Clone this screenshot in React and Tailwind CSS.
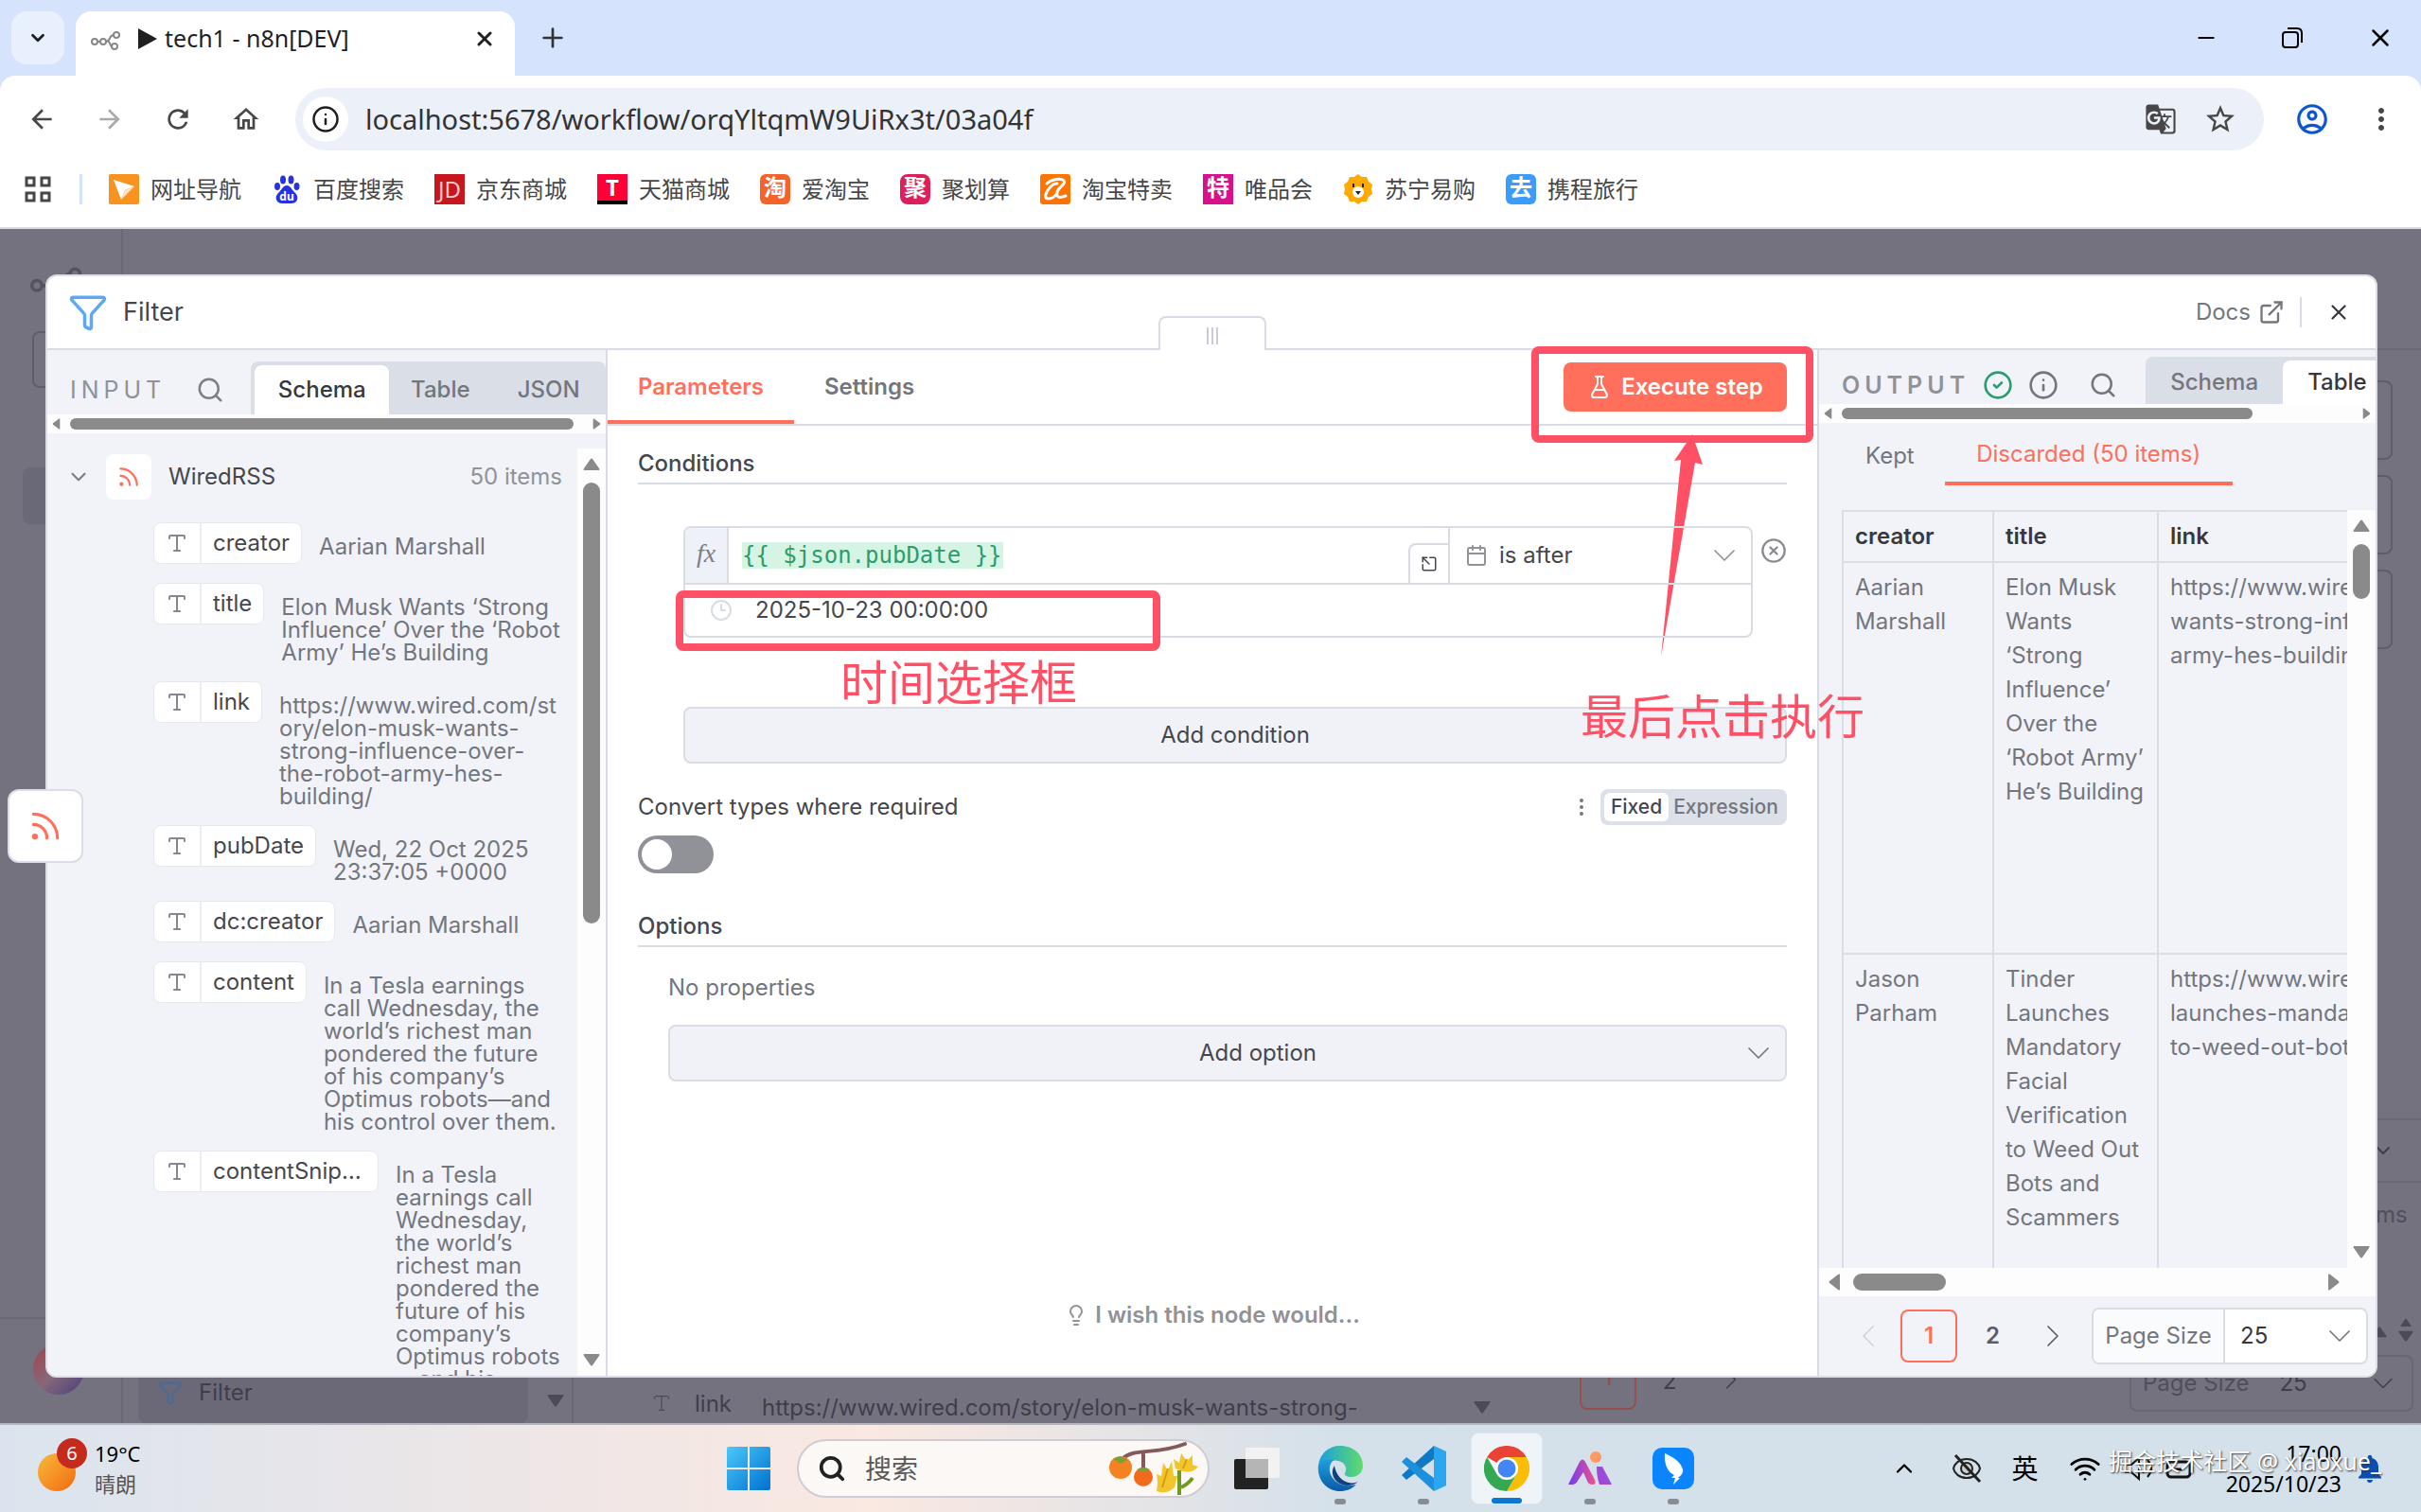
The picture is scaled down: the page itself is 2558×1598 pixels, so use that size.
import {
  Calendar, ChevronDown, ChevronLeft, ChevronRight, ChevronUp, CircleCheck, CircleX, Clock3, EllipsisVertical,
  ExternalLink, Funnel, Info, Lightbulb, Minus, Plus, Rss, Search, SquareArrowOutUpLeft, Type, Wifi, X,
} from 'lucide-react';
import { MdArrowBack, MdArrowForward, MdGTranslate, MdMoreVert, MdNotifications, MdOutlineAccountCircle, MdOutlineHome, MdRefresh, MdStarBorder } from 'react-icons/md';

const bookmarks = [
  { label: '网址导航', icon: <CompassIcon /> },
  { label: '百度搜索', icon: <PawIcon /> },
  { label: '京东商城', icon: <span className="w-8 h-8 bg-[#c8161d] text-[#f3c9c9] text-2xl leading-8 text-center">JD</span> },
  { label: '天猫商城', icon: <span className="w-8 h-8 bg-[#ff0036] border-b-4 border-black text-white text-2xl leading-7 font-bold text-center">T</span> },
  { label: '爱淘宝', icon: <span className="w-8 h-8 rounded-md bg-[#f4642a] text-white text-2xl leading-7 font-bold text-center">淘</span> },
  { label: '聚划算', icon: <span className="w-8 h-8 rounded-lg bg-[#dd1f5c] text-white text-2xl leading-7 font-bold text-center">聚</span> },
  { label: '淘宝特卖', icon: <AliIcon /> },
  { label: '唯品会', icon: <span className="w-8 h-8 bg-[#d8108c] text-white text-2xl leading-7 font-bold text-center">特</span> },
  { label: '苏宁易购', icon: <LionIcon /> },
  { label: '携程旅行', icon: <span className="w-8 h-8 rounded-md bg-[#3b9dfb] text-white text-2xl leading-7 font-bold text-center">去</span> },
];

const fields = [
  { name: 'creator', value: ['Aarian Marshall'] },
  { name: 'title', value: ['Elon Musk Wants ‘Strong', 'Influence’ Over the ‘Robot', 'Army’ He’s Building'] },
  { name: 'link', value: ['https://www.wired.com/st', 'ory/elon-musk-wants-', 'strong-influence-over-', 'the-robot-army-hes-', 'building/'] },
  { name: 'pubDate', value: ['Wed, 22 Oct 2025', '23:37:05 +0000'] },
  { name: 'dc:creator', value: ['Aarian Marshall'] },
  {
    name: 'content',
    value: ['In a Tesla earnings', 'call Wednesday, the', 'world’s richest man', 'pondered the future', 'of his company’s', 'Optimus robots—and', 'his control over them.'],
  },
  {
    name: 'contentSnippet',
    value: ['In a Tesla', 'earnings call', 'Wednesday,', 'the world’s', 'richest man', 'pondered the', 'future of his', 'company’s', 'Optimus robots', '—and his'],
  },
];

const rows = [
  {
    creator: 'Aarian Marshall',
    title: 'Elon Musk Wants ‘Strong Influence’ Over the ‘Robot Army’ He’s Building',
    link: ['https://www.wired.com/story/elon-musk-', 'wants-strong-influence-over-the-robot-', 'army-hes-building/'],
  },
  {
    creator: 'Jason Parham',
    title: 'Tinder Launches Mandatory Facial Verification to Weed Out Bots and Scammers',
    link: ['https://www.wired.com/story/tinder-', 'launches-mandatory-facial-verification-', 'to-weed-out-bots-and-scammers/'],
  },
];

function CompassIcon() {
  return (
    <svg viewBox="0 0 32 32" className="w-8 h-8">
      <rect width="32" height="32" rx="2" fill="#f7931e" />
      <path d="M5 6 27 13 17 17 13 27z" fill="#fff" />
      <path d="M17 17 27 13 13 27z" fill="#fde3c3" />
    </svg>
  );
}

function PawIcon() {
  return (
    <svg viewBox="0 0 32 32" className="w-8 h-8" fill="#2932e1">
      <ellipse cx="12" cy="6" rx="3" ry="4.5" />
      <ellipse cx="20.5" cy="6" rx="3" ry="4.5" />
      <ellipse cx="6" cy="13" rx="3" ry="4" />
      <ellipse cx="26.5" cy="13" rx="3" ry="4" />
      <path d="M16 12c4 0 5 4 8 7s4 5 3 8-4 4-6 4h-10c-2 0-5-1-6-4s0-5 3-8 4-7 8-7z" />
      <text x="16" y="28" fontSize="12" fontWeight="700" textAnchor="middle" fill="#fff">du</text>
    </svg>
  );
}

function AliIcon() {
  return (
    <svg viewBox="0 0 32 32" className="w-8 h-8">
      <rect width="32" height="32" rx="3" fill="#ff7300" />
      <path d="M7 10c5-5 15-6 18-3s-6 7-7 12 1 7 9 4M18 10c-4-1-9 5-11 9s-2 7 2 7 7-3 9-6" fill="none" stroke="#fff" strokeWidth="3" strokeLinecap="round" />
    </svg>
  );
}

function LionIcon() {
  return (
    <svg viewBox="0 0 32 32" className="w-8 h-8">
      <path d="M16 0l4 3 5 0 2 5 4 3-1 5 1 5-4 3-2 5-5 0-4 3-4-3-5 0-2-5-4-3 1-5-1-5 4-3 2-5 5 0z" fill="#ffaa01" />
      <circle cx="16" cy="19" r="6" fill="#fff" />
      <path d="M11 10v4M21 10v4" stroke="#222" strokeWidth="2" />
      <path d="M13 18h6l-3 4z" fill="#222" />
    </svg>
  );
}

function NodesIcon({ className }) {
  return (
    <svg viewBox="0 0 32 20" className={className} fill="none" stroke="currentColor" strokeWidth="2">
      <circle cx="4" cy="11" r="3" />
      <circle cx="13" cy="11" r="3" />
      <circle cx="27" cy="4" r="3" />
      <circle cx="25" cy="16" r="3" />
      <path d="M7 11h3M16 11c5 0 3-7 8-7M18 11c3 0 2 5 4 5" />
    </svg>
  );
}

function FlaskIcon() {
  return (
    <svg viewBox="0 0 18 24" className="w-[18px] h-6" fill="none" stroke="currentColor" strokeWidth="2" strokeLinecap="round" strokeLinejoin="round">
      <path d="M5 1h8M7 1v8L1 20q0 3 2 3h12q2 0 2-3L11 9V1M4 15h10" />
    </svg>
  );
}

function Arrow({ dir, fill = '#8a8a8a', className = '' }) {
  const paths = {
    left: 'M14 1v16q0 1-2 0L3 10q-1-1 0-2L12 1q2-1 2 0z',
    right: 'M4 1v16q0 1 2 0L15 10q1-1 0-2L6 1Q4 0 4 1z',
    up: 'M1 15h16q1-1 0-2L10 3q-1-1-2 0L1 13q-1 1 0 2z',
    down: 'M1 3h16q1 1 0 2L10 15q-1 1-2 0L1 5q-1-1 0-2z',
  };
  return (
    <svg viewBox="0 0 18 18" fill={fill} className={`shrink-0 ${className}`}>
      <path d={paths[dir]} />
    </svg>
  );
}

function HeaderScrollbar({ thumb }) {
  return (
    <div className="h-5 shrink-0 bg-[#fdfdfe] flex items-center gap-2 px-1">
      <Arrow dir="left" className="w-3 h-3" />
      <div className="flex-1 flex">
        <div className={`h-3 rounded-full bg-[#8a8a8a] ${thumb}`} />
      </div>
      <Arrow dir="right" className="w-3 h-3" />
    </div>
  );
}

function VerticalScrollbar({ thumb }) {
  return (
    <div className="w-[30px] shrink-0 bg-[#fdfdfe] flex flex-col items-center gap-[10px] py-2">
      <Arrow dir="up" className="w-[18px] h-[18px]" />
      <div className={`w-[18px] rounded-full bg-[#8a8a8a] ${thumb}`} />
      <Arrow dir="down" className="w-[18px] h-[18px] mt-auto" />
    </div>
  );
}

function BrowserChrome() {
  return (
    <header className="shrink-0 bg-[#d5e3fd] font-['Noto_Sans','Noto_Sans_CJK_SC',sans-serif]">
      <div className="h-20 flex items-end">
        <button aria-label="Search tabs" className="self-center ml-3 w-14 h-14 rounded-2xl bg-[#e8effd] flex items-center justify-center text-[#1f1f1f]">
          <ChevronDown size={22} strokeWidth={3} />
        </button>
        <div className="ml-3 w-[464px] h-[68px] rounded-t-2xl bg-white flex items-center pl-4 pr-5 pb-[10px] text-[#1f1f1f]">
          <NodesIcon className="w-8 h-5 mt-1 text-[#888] shrink-0" />
          <svg viewBox="0 0 20 22" className="w-5 h-[22px] ml-[18px] shrink-0"><path d="M0 0 20 11 0 22z" fill="#1f1f1f" /></svg>
          <span className="ml-2 flex-1 text-[25px] whitespace-nowrap">tech1 - n8n[DEV]</span>
          <button aria-label="Close tab"><X size={24} strokeWidth={3} /></button>
        </div>
        <button aria-label="New tab" className="ml-6 self-center text-[#333]"><Plus size={32} strokeWidth={2} /></button>
        <div className="ml-auto self-center flex gap-[66px] pr-7 text-black">
          <button aria-label="Minimize"><Minus size={26} strokeWidth={2} /></button>
          <button aria-label="Restore">
            <svg viewBox="0 0 24 24" className="w-6 h-6" fill="none" stroke="currentColor" strokeWidth="2">
              <rect x="2" y="6" width="16" height="16" rx="3" />
              <path d="M7 2h10q5 0 5 5v10" />
            </svg>
          </button>
          <button aria-label="Close window"><X size={30} strokeWidth={2} /></button>
        </div>
      </div>

      <div className="h-[92px] bg-white rounded-t-2xl flex items-center pl-7 pr-6 text-[#474747]">
        <div className="flex items-center gap-10 text-[32px]">
          <button aria-label="Back"><MdArrowBack /></button>
          <button aria-label="Forward" className="text-[#aaa]"><MdArrowForward /></button>
          <button aria-label="Reload"><MdRefresh /></button>
          <button aria-label="Home"><MdOutlineHome /></button>
        </div>
        <div className="ml-9 flex-1 h-[66px] rounded-full bg-[#ebf0f9] flex items-center pl-2 pr-7">
          <span className="w-12 h-12 rounded-full bg-white flex items-center justify-center text-[#1f1f1f]">
            <Info size={30} strokeWidth={2} />
          </span>
          <input aria-label="Address" className="ml-[18px] flex-1 bg-transparent text-[29px] text-[#333] outline-none" defaultValue="localhost:5678/workflow/orqYltqmW9UiRx3t/03a04f" />
          <button aria-label="Translate" className="text-[34px]"><MdGTranslate /></button>
          <button aria-label="Bookmark" className="text-[36px] ml-7"><MdStarBorder /></button>
        </div>
        <button aria-label="Profile" className="ml-8 text-[38px] text-[#0b57d0]"><MdOutlineAccountCircle /></button>
        <button aria-label="Menu" className="ml-9 text-[36px]"><MdMoreVert /></button>
      </div>

      <nav className="h-[70px] bg-white border-b-2 border-[#dcdcde] flex items-start pt-3 pl-[26px]">
        <svg viewBox="0 0 28 28" className="w-7 h-7 mt-[2px]" fill="none" stroke="#474747" strokeWidth="3">
          <rect x="2" y="2" width="8" height="8" /><rect x="18" y="2" width="8" height="8" />
          <rect x="2" y="18" width="8" height="8" /><rect x="18" y="18" width="8" height="8" />
        </svg>
        <span className="w-[3px] h-8 ml-[30px] mr-7 bg-[#d5e3fd]" />
        <div className="flex gap-8">
          {bookmarks.map(b => (
            <a key={b.label} href="#" className="flex items-center gap-3 h-8 text-2xl leading-8 text-[#474747] whitespace-nowrap">
              {b.icon}
              {b.label}
            </a>
          ))}
        </div>
      </nav>
    </header>
  );
}

// Dimmed workflow editor that shows around the open node window
function Backdrop() {
  return (
    <div aria-hidden="true" className="absolute inset-0 flex overflow-hidden text-2xl text-[#3f3e49]">
      <div className="w-[130px] shrink-0 border-r-2 border-[#6a6875] flex flex-col">
        <NodesIcon className="w-14 h-9 mt-10 ml-8 text-[#55535f]" />
        <div className="mt-8 ml-[34px] h-[60px] rounded-lg border-2 border-[#5f5d6a]" />
        <div className="mt-[84px] ml-6 h-[60px] rounded-lg bg-[#6a6978]" />
        <div className="mt-auto h-[112px] border-t-2 border-[#6a6875] pl-[35px] pt-[26px]">
          <div className="w-[54px] h-[54px] rounded-full bg-linear-to-br from-[#a03f4c] via-[#87667a] to-[#4a3f78]" />
        </div>
      </div>
      <div className="flex-1 flex items-end">
        <div className="ml-4 w-[412px] h-14 bg-[#6b6977] rounded-b-lg flex items-center pl-5 pb-2 gap-4">
          <Funnel size={28} className="text-[#4d6a92]" /> Filter
        </div>
        <div className="w-12 h-14 border-r-2 border-[#6a6875] flex items-center justify-center pl-3 pt-2"><Arrow dir="down" fill="#4c4a56" className="w-[18px] h-[18px]" /></div>
        <div className="ml-[82px] h-9 flex gap-6 whitespace-nowrap">
          <Type size={22} strokeWidth={1} className="mt-1" />
          <span>link</span>
          <span className="ml-2 pt-1">https://www.wired.com/story/elon-musk-wants-strong-</span>
        </div>
        <Arrow dir="down" fill="#4c4a56" className="w-[18px] h-[18px] mb-2 ml-[122px]" />
        <div className="ml-[94px] mb-[14px] w-[60px] h-14 rounded-lg border-2 border-[#94504f] text-[#94504f] text-center leading-10">1</div>
        <span className="ml-7 mb-7">2</span>
        <ChevronRight size={36} strokeWidth={1} className="ml-10 mb-7" />
        <div className="ml-auto mr-2 mb-3 w-[300px] h-[60px] shrink-0 rounded-lg border-2 border-[#686673] flex items-center pl-3">
          <span className="text-[#504e5a]">Page Size</span>
          <span className="ml-8 flex-1">25</span>
          <ChevronDown size={36} strokeWidth={1} className="mr-3" />
        </div>
      </div>
      <div className="absolute right-0 top-0 w-[60px] h-full flex flex-col">
        <div className="h-[128px] border-b-2 border-[#6a6875]" />
        <div className="mt-8 mr-[30px] h-[84px] rounded-lg border-2 border-[#605e6b]" />
        <div className="mt-4 mr-[30px] h-[84px] rounded-lg border-2 border-[#605e6b]" />
        <div className="mt-4 mr-[30px] h-[84px] rounded-lg border-2 border-[#605e6b]" />
        <div className="mt-auto h-[68px] border-y-2 border-[#6a6875] flex items-center pl-2"><ChevronDown size={24} /></div>
        <div className="h-[68px] leading-[68px] pl-3 text-[#504e5a]">ms</div>
        <div className="h-[74px]" />
        <div className="h-28 flex gap-3 pl-2">
          <Arrow dir="up" fill="#4c4a56" className="w-4 h-4 mt-2" />
          <div className="flex flex-col">
            <Arrow dir="up" fill="#4c4a56" className="w-4 h-3" />
            <Arrow dir="down" fill="#4c4a56" className="w-4 h-4" />
          </div>
        </div>
      </div>
    </div>
  );
}

function InputPanel() {
  return (
    <section aria-label="Input" className="w-[592px] shrink-0 border-r-2 border-[#d9dbe6] bg-[#f1f3f9] rounded-bl-xl flex flex-col min-h-0 overflow-hidden">
      <div className="h-[68px] shrink-0 flex items-end pl-6">
        <h2 className="h-[52px] leading-[52px] text-[25px] tracking-[5px] text-[#909298]">INPUT</h2>
        <button aria-label="Search input" className="ml-8 h-[52px] text-[#7d7f86]"><Search size={30} strokeWidth={2} /></button>
        <div className="ml-7 flex-1 h-14 rounded-t-lg bg-[#d9dee7] pt-1 pl-1 flex text-2xl font-medium text-[#74767d]">
          <button className="w-[142px] rounded-t-lg bg-white text-[#37383d]">Schema</button>
          <button className="w-[108px]">Table</button>
          <button className="flex-1">JSON</button>
        </div>
      </div>
      <HeaderScrollbar thumb="w-[532px]" />
      <div className="flex-1 min-h-0 flex">
        <div className="flex-1 min-w-0 overflow-hidden pt-[22px] pl-6 pr-4">
          <div className="flex items-center h-12 text-2xl">
            <ChevronDown size={26} className="-ml-1 text-[#7d7f86]" />
            <span className="ml-4 w-12 h-12 rounded-lg bg-white flex items-center justify-center text-[#ff6f5c]"><Rss size={26} strokeWidth={2} /></span>
            <span className="ml-[18px] flex-1 text-[#46474c]">WiredRSS</span>
            <span className="text-[#909298]">50 items</span>
          </div>
          <ul className="mt-6 pl-[88px] flex flex-col gap-5">
            {fields.map(f => (
              <li key={f.name} className="flex items-start">
                <span className="h-11 max-w-[238px] shrink-0 rounded-lg bg-white border border-[#e6e8f0] flex items-center text-2xl text-[#46474c]">
                  <span className="w-[50px] h-full shrink-0 border-r-2 border-[#eceef4] flex items-center justify-center text-[#85878e]"><Type size={24} strokeWidth={2} /></span>
                  <span className="px-3 truncate">{f.name}</span>
                </span>
                <span className="ml-[18px] pt-[14px] -mb-[2px] text-2xl leading-6 text-[#74767d] whitespace-nowrap">
                  {f.value.map(line => <span key={line} className="block">{line}</span>)}
                </span>
              </li>
            ))}
          </ul>
        </div>
        <div className="pt-4 flex"><VerticalScrollbar thumb="h-[466px]" /></div>
      </div>
    </section>
  );
}

function ConditionRow() {
  return (
    <div className="relative mt-11 ml-12 flex items-start">
      <div className="flex-1 h-[118px] rounded-lg border-2 border-[#dadce3] flex flex-col overflow-hidden">
        <div className="h-[60px] border-b-2 border-[#dadce3] flex">
          <span className="w-[46px] bg-[#eff1f8] border-r-2 border-[#dadce3] flex items-center justify-center pb-1 font-['Liberation_Serif',serif] italic text-[28px] text-[#7d7f86]">fx</span>
          <div className="flex-1 flex items-center pl-[14px]">
            <input aria-label="Value 1" className="w-[276px] h-7 bg-[#d6f4e4] text-[#2a9d6c] text-2xl font-['DejaVu_Sans_Mono',monospace] outline-none" defaultValue="{{ $json.pubDate }}" />
          </div>
          <button aria-label="Open editor" className="self-end w-[42px] h-[42px] rounded-tl-lg border-t-2 border-l-2 border-[#dadce3] flex items-center justify-center text-[#46474c]">
            <SquareArrowOutUpLeft size={18} strokeWidth={2} />
          </button>
          <label className="w-[320px] border-l-2 border-[#dadce3] flex items-center pl-4 pr-2 text-[#909298]">
            <Calendar size={24} strokeWidth={2} />
            <select aria-label="Operator" className="ml-3 flex-1 appearance-none bg-transparent text-2xl text-[#46474c] outline-none">
              <option>is after</option>
            </select>
            <ChevronDown size={40} strokeWidth={1} />
          </label>
        </div>
        <label className="flex-1 flex items-center pl-[26px] text-[#dadce3]">
          <Clock3 size={24} strokeWidth={2} />
          <input aria-label="Value 2" className="ml-6 flex-1 text-2xl text-[#46474c] outline-none bg-transparent" defaultValue="2025-10-23 00:00:00" />
        </label>
      </div>
      <button aria-label="Remove condition" className="ml-2 mt-3 text-[#8a8c93]"><CircleX size={28} strokeWidth={2} /></button>
      <div className="absolute -left-2 top-[68px] w-[512px] h-16 rounded-lg border-8 border-[#ff5065]" />
      <p className="absolute left-[166px] top-[132px] text-[50px] leading-[68px] text-[#ff5065] whitespace-nowrap">时间选择框</p>
    </div>
  );
}

function ParametersPanel() {
  return (
    <section aria-label="Parameters" className="relative z-10 flex-1 min-w-0 bg-white flex flex-col text-2xl text-[#46474c]">
      <div className="h-20 shrink-0 border-b-2 border-[#dadce3] flex pr-8 font-semibold">
        <button className="w-[197px] h-[78px] pt-1 border-b-4 border-[#ff6f5c] text-[#ff6f5c] text-center">Parameters</button>
        <button className="ml-8 text-[#74767d]">Settings</button>
        <div className="relative ml-auto mt-[13px] h-[52px]">
          <button className="w-[236px] h-[52px] rounded-lg bg-[#ff6f5c] text-white flex items-center justify-center gap-[14px] pl-1">
            <FlaskIcon />
            Execute step
          </button>
          <div className="absolute -top-[17px] -bottom-[33px] -left-[34px] -right-7 rounded-lg border-8 border-[#ff5065]" />
          <svg viewBox="0 0 46 236" className="absolute left-[102px] top-[76px] w-[46px] h-[236px]">
            <path d="M34 0 45 32 37 30 1 235 22 27 15 28z" fill="#ff5065" />
          </svg>
          <p className="absolute left-[18px] top-[341px] text-[50px] leading-[68px] font-normal text-[#ff5065] whitespace-nowrap">最后点击执行</p>
        </div>
      </div>

      <div className="flex-1 min-h-0 flex flex-col pl-8 pr-8 pt-5">
        <h3 className="h-[42px] leading-10 border-b-2 border-[#dadce3] font-medium">Conditions</h3>
        <ConditionRow />
        <button className="mt-[73px] ml-12 h-[60px] shrink-0 rounded-lg border-2 border-[#dadce6] bg-[#f1f2f8]">Add condition</button>
        <div className="mt-[27px] h-[38px] flex items-center">
          <label htmlFor="convert-types" className="flex-1">Convert types where required</label>
          <button aria-label="Field options" className="mr-2 text-[#74767d]"><EllipsisVertical size={24} /></button>
          <div className="h-[38px] p-1 rounded-lg bg-[#dce0e9] flex text-[21px] leading-[30px] font-medium text-[#74767d]">
            <button className="w-[68px] rounded-md bg-white text-[#46474c]">Fixed</button>
            <button className="w-[121px]">Expression</button>
          </div>
        </div>
        <input id="convert-types" type="checkbox" role="switch" className="appearance-none mt-[11px] w-20 h-10 shrink-0 rounded-full bg-[#909298] before:content-[''] before:block before:mt-1 before:ml-1 before:w-8 before:h-8 before:rounded-full before:bg-white" />
        <h3 className="mt-9 h-[42px] shrink-0 leading-10 border-b-2 border-[#dadce3] font-medium">Options</h3>
        <p className="mt-[23px] ml-8 leading-10 text-[#74767d]">No properties</p>
        <button className="mt-[19px] ml-8 h-[60px] shrink-0 rounded-lg border-2 border-[#dadce6] bg-[#f1f2f8] flex items-center pl-28 pr-2">
          <span className="flex-1 text-center">Add option</span>
          <ChevronDown size={40} strokeWidth={1} className="text-[#74767d]" />
        </button>
        <a href="#" className="mt-auto mb-[46px] flex items-center justify-center gap-2 leading-9 font-semibold text-[#909298]">
          <Lightbulb size={24} strokeWidth={2} />
          I wish this node would...
        </a>
      </div>
    </section>
  );
}

function OutputPanel() {
  return (
    <section aria-label="Output" className="w-[590px] shrink-0 border-l-2 border-[#d9dbe6] bg-[#f1f3f9] rounded-br-xl flex flex-col min-h-0 overflow-hidden">
      <div className="h-[57px] shrink-0 flex items-end pl-6">
        <h2 className="h-10 leading-10 text-[25px] font-semibold tracking-[5px] text-[#909298]">OUTPUT</h2>
        <div className="ml-[14px] h-10 flex items-center gap-4 text-[#74767d]">
          <CircleCheck size={32} className="text-[#2a9d6c]" />
          <Info size={32} />
          <button aria-label="Search output" className="ml-4"><Search size={30} /></button>
        </div>
        <div className="ml-[30px] flex-1 h-[50px] rounded-tl-lg bg-[#d9dee7] flex items-end text-2xl font-medium text-[#74767d] overflow-hidden">
          <button className="w-[145px] h-[46px] shrink-0">Schema</button>
          <button className="w-[110px] h-[46px] shrink-0 pl-[26px] text-left rounded-tl-lg bg-white text-[#37383d]">Table</button>
        </div>
      </div>
      <HeaderScrollbar thumb="w-[434px]" />
      <div className="h-[66px] shrink-0 flex pl-[49px] text-2xl text-[#74767d]">
        <button className="h-[66px] pt-1">Kept</button>
        <button className="ml-8 w-[304px] h-[66px] pt-1 border-b-4 border-[#ff6f5c] text-[#ff6f5c]">Discarded (50 items)</button>
      </div>

      <div className="mt-[26px] flex-1 min-h-0 flex">
        <div className="flex-1 min-w-0 overflow-hidden pl-6">
          <table className="w-[700px] table-fixed border-collapse text-2xl leading-9 text-[#74767d]">
            <thead>
              <tr className="h-[54px] text-left text-[#37383d]">
                <th className="w-[159px] px-3 border-2 border-[#dadce6] font-semibold">creator</th>
                <th className="w-[174px] px-3 border-2 border-[#dadce6] font-semibold">title</th>
                <th className="px-3 border-2 border-[#dadce6] font-semibold">link</th>
              </tr>
            </thead>
            <tbody>
              {rows.map(r => (
                <tr key={r.creator} className="h-[414px] align-top">
                  <td className="px-3 py-2 border-2 border-[#dadce6]">{r.creator}</td>
                  <td className="pl-3 pr-2 py-2 border-2 border-[#dadce6]">{r.title}</td>
                  <td className="px-3 py-2 border-2 border-[#dadce6] whitespace-nowrap">
                    {r.link.map(line => <span key={line} className="block">{line}</span>)}
                  </td>
                </tr>
              ))}
            </tbody>
          </table>
        </div>
        <VerticalScrollbar thumb="h-[58px]" />
      </div>

      <div className="h-[30px] shrink-0 bg-[#fdfdfe] flex items-center pl-2 pr-9">
        <Arrow dir="left" className="w-[18px] h-[18px]" />
        <div className="ml-[10px] w-[98px] h-[18px] rounded-full bg-[#8a8a8a]" />
        <Arrow dir="right" className="w-[18px] h-[18px] ml-auto" />
      </div>
      <div className="h-[84px] shrink-0 flex items-center pl-8 pr-2 text-2xl text-[#5c5e64]">
        <button aria-label="Previous page" disabled className="text-[#d0d2da]"><ChevronLeft size={40} strokeWidth={1} /></button>
        <button className="ml-[14px] w-[60px] h-14 rounded-lg border-2 border-[#ff6f5c] font-semibold text-[#ff6f5c]">1</button>
        <button className="ml-[30px] font-semibold">2</button>
        <button aria-label="Next page" className="ml-9"><ChevronRight size={40} strokeWidth={1} /></button>
        <label className="ml-auto w-[292px] h-[60px] rounded-lg border-2 border-[#dadce3] bg-white flex items-center text-[#74767d] overflow-hidden">
          <span className="h-full w-[139px] shrink-0 flex items-center justify-center whitespace-nowrap border-r-2 border-[#dadce3] bg-[#fafbfd]">Page Size</span>
          <select className="ml-4 flex-1 appearance-none bg-transparent text-[#37383d] outline-none">
            <option>25</option>
          </select>
          <ChevronDown size={40} strokeWidth={1} className="mr-2" />
        </label>
      </div>
    </section>
  );
}

function NodeWindow() {
  return (
    <div role="dialog" aria-label="Filter" className="relative flex-1 min-w-0 rounded-xl border-2 border-[#dcdde8] bg-white flex flex-col">
      <div className="relative h-[78px] shrink-0 border-b-2 border-[#d9dbe6] flex items-center pl-[22px]">
        <Funnel size={42} strokeWidth={2} className="text-[#5ba8f5]" />
        <h1 className="ml-4 flex-1 text-[27px] text-[#46474c]">Filter</h1>
        <a href="#" className="flex items-center gap-2 text-2xl text-[#74767d]">Docs <ExternalLink size={28} strokeWidth={2} /></a>
        <span className="ml-4 w-[2px] h-8 bg-[#d9dbe6]" />
        <button aria-label="Close" className="mx-[26px] text-[#37383d]"><X size={26} strokeWidth={2} /></button>
        <div className="absolute z-20 left-[1174px] -bottom-[2px] w-[114px] h-[36px] pt-1 rounded-t-lg border-2 border-b-0 border-[#d9dbe6] bg-white flex items-center justify-center gap-[3px]">
          <span className="w-[2px] h-[18px] bg-[#c9ccd8]" />
          <span className="w-[2px] h-[18px] bg-[#c9ccd8]" />
          <span className="w-[2px] h-[18px] bg-[#c9ccd8]" />
        </div>
      </div>
      <div className="flex-1 min-h-0 flex">
        <InputPanel />
        <ParametersPanel />
        <OutputPanel />
      </div>
      <button aria-label="Previous node" className="absolute -left-[42px] top-[542px] w-20 h-[78px] rounded-xl border-2 border-[#dcdde8] bg-white flex items-center justify-center text-[#ff6f5c]">
        <Rss size={38} strokeWidth={2} />
      </button>
    </div>
  );
}

function EdgeIcon() {
  return (
    <svg viewBox="0 0 48 48" className="w-12 h-12">
      <defs>
        <linearGradient id="edgeTop" x1="0" y1="0" x2="1" y2="0"><stop stopColor="#1b9de2" /><stop offset="1" stopColor="#5fdc6a" /></linearGradient>
        <linearGradient id="edgeBody" x1="0" y1="0" x2="0" y2="1"><stop stopColor="#1da0e0" /><stop offset="1" stopColor="#0c59a4" /></linearGradient>
      </defs>
      <path d="M1 20C3 8 12 0 24 0c14 0 24 9 24 21 0 8-6 12-12 12-5 0-8-2-7-4 3-5 0-12-7-13C12 14 3 17 1 20z" fill="url(#edgeTop)" />
      <path d="M1 20c3-5 10-7 17-5-6 3-7 12-2 19s14 10 25 7C36 46 30 48 24 48 10 48-1 36 1 20z" fill="url(#edgeBody)" />
      <path d="M18 21c-5 7-1 17 8 20 6 2 12 1 17-3-4 2-10 2-15-1s-9-9-10-16z" fill="#123f7d" />
    </svg>
  );
}

function CodeIcon() {
  return (
    <svg viewBox="0 0 48 48" className="w-12 h-12">
      <path d="M35 0 48 6V42L35 48z" fill="#2aa7f0" />
      <path d="M35 0v14L6 36 1 31z" fill="#1178c4" />
      <path d="M35 48V34L6 12 1 17z" fill="#1c8fdd" />
    </svg>
  );
}

function ChromeIcon() {
  return (
    <svg viewBox="0 0 48 48" className="w-12 h-12">
      <path d="M24 24 3.2 12A24 24 0 0 1 44.8 12z" fill="#ea4335" />
      <path d="M24 12H44.8A24 24 0 0 1 24 48L34.4 30z" fill="#fbbc05" />
      <path d="M3.2 12A24 24 0 0 0 24 48L34.4 30 13.6 30z" fill="#34a853" />
      <circle cx="24" cy="24" r="12" fill="#fff" />
      <circle cx="24" cy="24" r="9.5" fill="#4285f4" />
    </svg>
  );
}

function AiIcon() {
  return (
    <svg viewBox="0 0 48 48" className="w-12 h-12">
      <defs><linearGradient id="ai" x1="0" y1="0" x2="1" y2="0"><stop stopColor="#6a3df5" /><stop offset="1" stopColor="#f0508c" /></linearGradient></defs>
      <path d="M1 41 13 17q3-5 6 0l9 17q4 7-1 7t-6-4l-4-9-6 9q-2 4-6 4z" fill="url(#ai)" />
      <path d="M31 22h6l10 19H34q-3-8-3-19z" fill="#9b4bd8" />
      <circle cx="30" cy="12" r="6" fill="#ff9a62" />
    </svg>
  );
}

function WingIcon() {
  return (
    <svg viewBox="0 0 44 44" className="w-11 h-11">
      <rect width="44" height="44" rx="10" fill="#0a84ff" />
      <path d="M13 6c9 4 17 9 19 17 1 4-3 8-6 9h3l-7 7 2-7h-4l3-3c-7-3-11-12-10-23z" fill="#fff" />
    </svg>
  );
}

function FruitBranch() {
  return (
    <svg viewBox="0 0 100 60" className="w-[100px] h-[60px]">
      <path d="M14 20C24 8 50 16 80 4M36 14v18" fill="none" stroke="#84595b" strokeWidth="4" strokeLinecap="round" />
      <circle cx="12" cy="29" r="12" fill="#f58220" />
      <circle cx="36" cy="39" r="10" fill="#f26a1b" />
      <path d="M4 20q8-5 15 1l-7 4zM29 31q7-4 14 0l-7 3z" fill="#7ba035" />
      <path d="M74 58V32M76 50q8-4 12-10" stroke="#6f9c1f" strokeWidth="4" fill="none" />
      <path d="M50 54q2-10 0-18l5 2 2-14 5 8 4-10 2 16 4 0-3 12q-8 8-19 4zM70 30l-2-10 6 4 2-10 6 8 6-6 0 10 6 2q-8 10-24 2z" fill="#f2c52c" />
      <path d="M56 50l6-20M78 30l4-10" stroke="#d99a10" strokeWidth="2" />
    </svg>
  );
}

const apps = [
  { name: 'Edge', icon: <EdgeIcon /> },
  { name: 'Code', icon: <CodeIcon /> },
  { name: 'Chrome', icon: <ChromeIcon />, active: true },
  { name: 'AI', icon: <AiIcon /> },
  { name: 'DingTalk', icon: <WingIcon /> },
];

function Taskbar() {
  return (
    <footer className="relative h-[94px] shrink-0 border-t-2 border-[#b3b4c0] bg-linear-to-r from-[#dbe4ee] from-0% via-[#fae8e1] via-36% to-[#d5e1ea] to-55% flex items-center text-black font-['Noto_Sans','Noto_Sans_CJK_SC',sans-serif]">
      <div className="flex-1 flex items-center pl-10">
        <div className="relative w-14 h-14">
          <span className="absolute left-0 bottom-1 w-10 h-10 rounded-full bg-linear-to-br from-[#f8b83a] to-[#f0690c]" />
          <span className="absolute right-1 -top-1 w-8 h-8 rounded-full bg-[#c42b1c] text-white text-xl leading-8 text-center">6</span>
        </div>
        <div className="ml-1 text-[22px] leading-8">
          <div>19°C</div>
          <div className="text-[#555]">晴朗</div>
        </div>
      </div>
      <div className="ml-3 flex items-center">
        <button aria-label="Start" className="mr-7">
          <svg viewBox="0 0 46 46" className="w-[46px] h-[46px]">
            <defs><linearGradient id="win" x1="0" y1="0" x2="1" y2="1"><stop stopColor="#4cc8f8" /><stop offset="1" stopColor="#0070d0" /></linearGradient></defs>
            <path d="M2 0h20v22H0V2q0-2 2-2zM24 0h20q2 0 2 2v20H24zM0 24h22v22H2q-2 0-2-2zM24 24h22v20q0 2-2 2H24z" fill="url(#win)" />
          </svg>
        </button>
        <label className="w-[436px] h-[62px] rounded-full border-2 border-[#cfcdd3] bg-[#fbf8f6] flex items-center pl-5 pr-1 overflow-hidden">
          <Search size={30} strokeWidth={3} className="text-[#222] shrink-0" />
          <input aria-label="搜索" placeholder="搜索" className="ml-5 flex-1 min-w-0 bg-transparent text-[28px] placeholder:text-[#5a5a5a] outline-none" />
          <FruitBranch />
        </label>
        <button aria-label="Task view" className="ml-[26px] mr-[26px]">
          <svg viewBox="0 0 48 48" className="w-12 h-12">
            <rect y="14" width="36" height="32" rx="2" fill="#222" />
            <rect x="12" y="2" width="36" height="32" rx="2" fill="#f2f2f2" />
            <rect x="12" y="14" width="24" height="20" fill="#b5b5b5" />
          </svg>
        </button>
        <div className="flex gap-3">
          {apps.map(app => (
            <button key={app.name} aria-label={app.name} className={`relative w-[76px] h-[76px] rounded-lg flex items-center justify-center ${app.active ? 'bg-[#eff4f9] border border-[#dfe5ea]' : ''}`}>
              {app.icon}
              <span className={`absolute bottom-0 h-[6px] rounded-full ${app.active ? 'w-8 bg-[#0b78d4]' : 'w-3 bg-[#868c92]'}`} />
            </button>
          ))}
        </div>
      </div>
      <div className="relative flex-1 flex items-center justify-end pr-9">
        <ChevronUp size={28} />
        <svg viewBox="0 0 32 32" className="ml-9 w-8 h-8" fill="none" stroke="#222" strokeWidth="2">
          <path d="M16 6c8 0 13 5 14 10-1 5-6 10-14 10S3 21 2 16C3 11 8 6 16 6z" />
          <circle cx="16" cy="16" r="6" fill="#ccc" />
          <path d="M4 2 30 30" strokeWidth="3" />
        </svg>
        <span className="ml-8 text-[28px]">英</span>
        <Wifi size={34} className="ml-8" />
        <svg viewBox="0 0 36 28" className="ml-6 w-9 h-7" fill="none" stroke="#111" strokeWidth="2">
          <path d="M2 10h6l8-7v22l-8-7H2zM20 9q4 5 0 10M25 5q8 9 0 18" />
        </svg>
        <svg viewBox="0 0 32 28" className="ml-2 w-8 h-7" fill="none" stroke="#111" strokeWidth="3">
          <rect x="2" y="7" width="24" height="16" rx="4" />
          <path d="M28 12v6M8 15h10" />
        </svg>
        <div className="ml-8 text-[23px] leading-8 text-right">
          <div>17:00</div>
          <div>2025/10/23</div>
        </div>
        <MdNotifications className="ml-3 text-[36px] text-[#0a4fb0]" />
        <span className="absolute right-[42px] top-1/2 -mt-6 text-[25px] leading-8 text-white whitespace-nowrap [text-shadow:1px_1px_2px_#333]">掘金技术社区 @ xiaoxue_</span>
      </div>
    </footer>
  );
}

export default function App() {
  return (
    <div className="h-screen flex flex-col overflow-hidden bg-[#757280] font-['Inter','Noto_Sans_CJK_SC',sans-serif]">
      <BrowserChrome />
      <main className="relative flex-1 min-h-0 p-12 pr-[46px] flex">
        <Backdrop />
        <NodeWindow />
      </main>
      <Taskbar />
    </div>
  );
}
